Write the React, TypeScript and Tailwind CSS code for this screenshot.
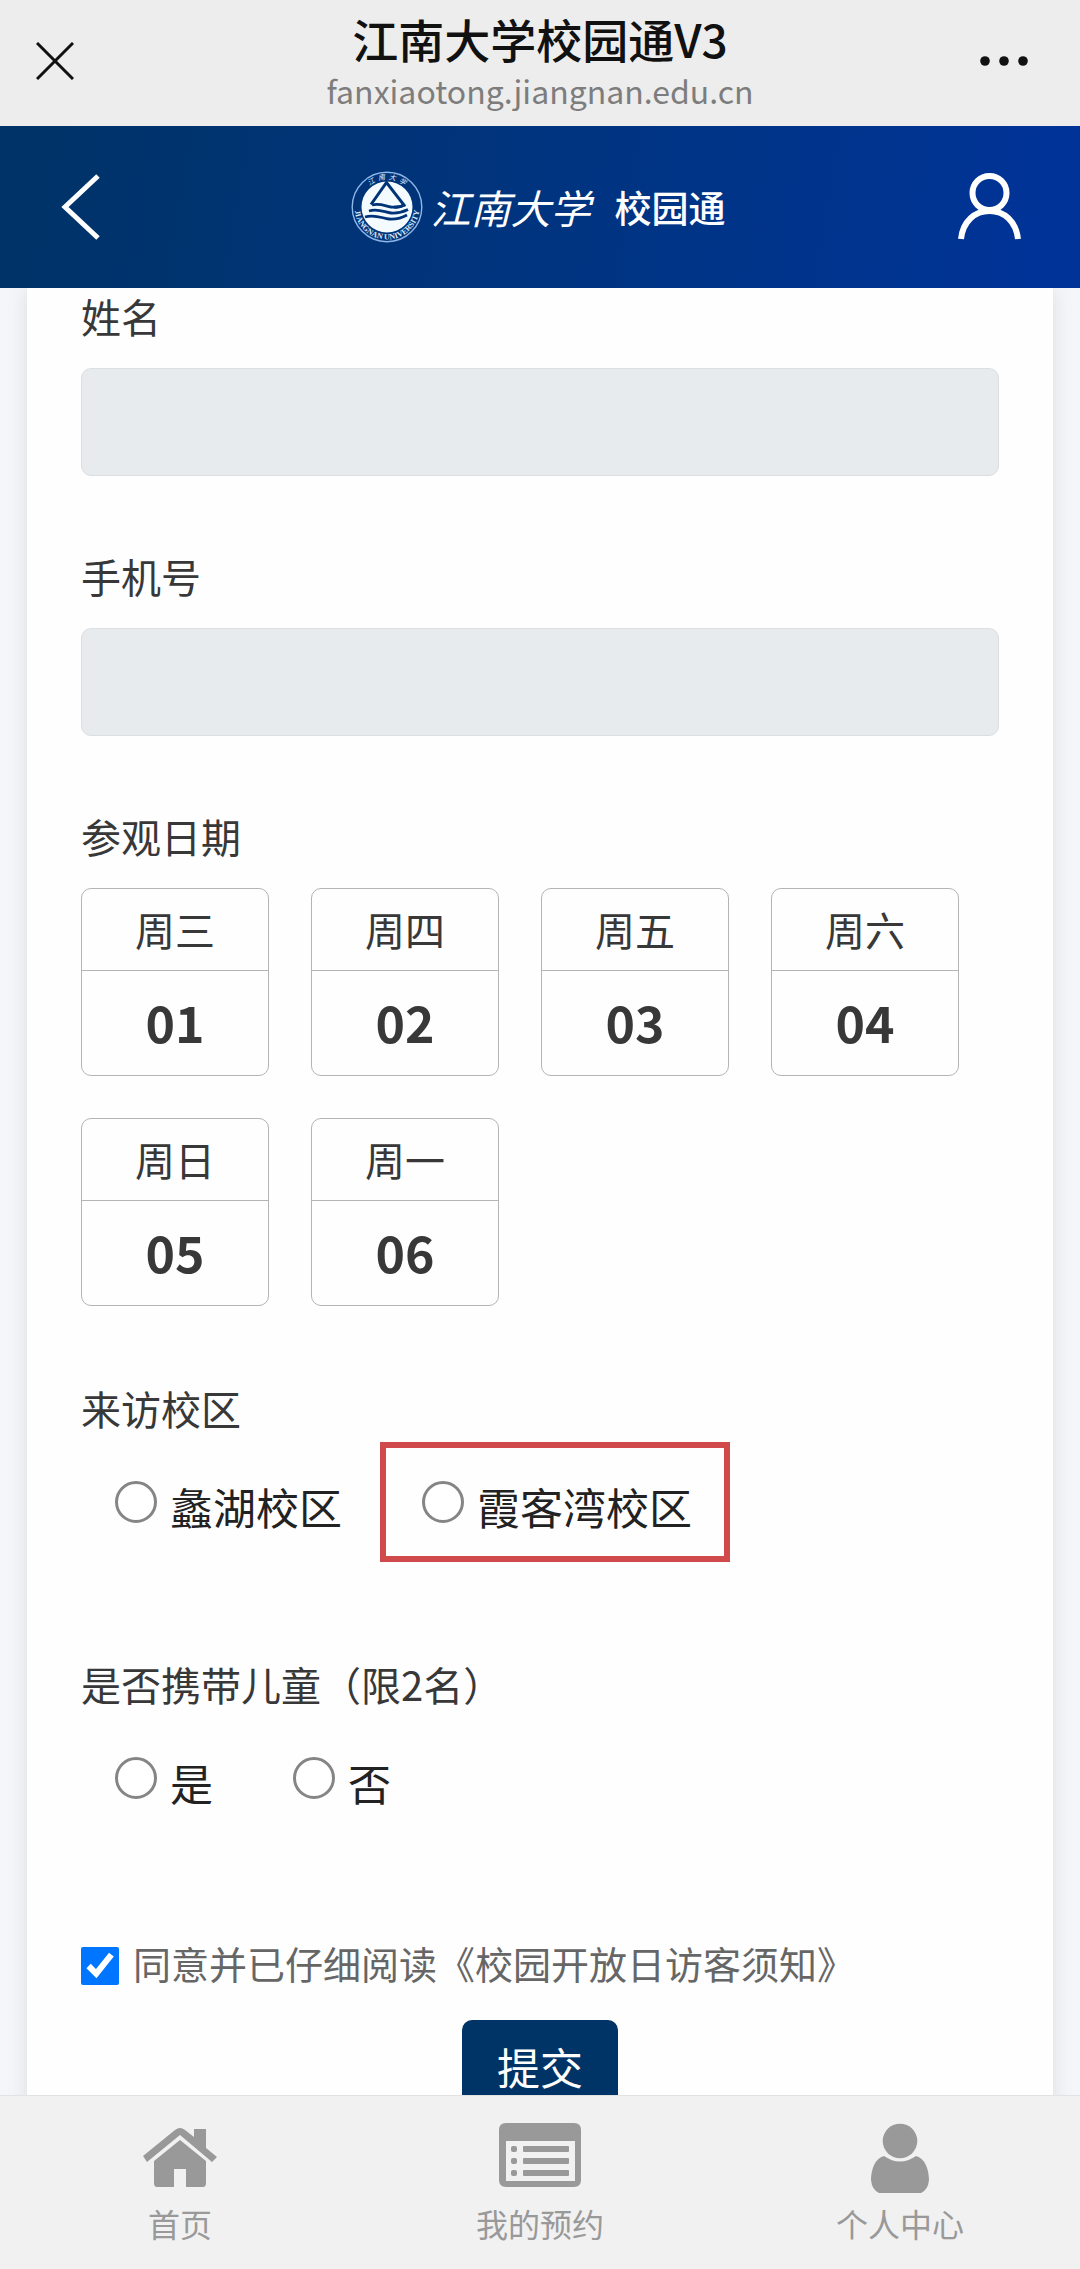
import React, { useState } from 'react';

const days = [
  { week: '周三', day: '01' },
  { week: '周四', day: '02' },
  { week: '周五', day: '03' },
  { week: '周六', day: '04' },
  { week: '周日', day: '05' },
  { week: '周一', day: '06' },
];

function Emblem() {
  return (
    <svg viewBox="0 0 72 72" className="size-[72px]" aria-hidden="true">
      <defs>
        <path id="ring-bottom" d="M3.500 36a32.500 32.500 0 0 0 65 0" />
        <path id="ring-top" d="M8.500 36a27.500 27.500 0 0 1 55 0" />
      </defs>
      <circle cx="36" cy="36" r="34.800" fill="none" stroke="#8fb6e8" strokeWidth="1.400" />
      <circle cx="36" cy="36" r="25.500" fill="#f4fbff" />
      <path d="M20 33.500 35.500 11.500 53 34q-5 3-10 2" fill="none" stroke="#003377" strokeWidth="3" />
      <g fill="none" stroke="#003377" strokeWidth="2.800">
        <path d="M21 34c8-2 13 1 19 2 6 .5 9 .5 14-2" />
        <path d="M18 40c9-3 16 1.500 22 2 7 .5 11-.5 17-3.500" />
        <path d="M14 46c10-3 18 1.500 24 2 8 .5 12-.5 18-4" />
      </g>
      <text className="font-['Liberation_Serif',serif] text-[8px] font-bold" fill="#dcebff">
        <textPath href="#ring-bottom" startOffset="50%" textAnchor="middle">JIANGNAN UNIVERSITY</textPath>
      </text>
      <text className="text-[7px] italic" fill="#dcebff">
        <textPath href="#ring-top" startOffset="50%" textAnchor="middle">江&#160;&#160;南&#160;&#160;大&#160;&#160;学</textPath>
      </text>
    </svg>
  );
}

function TextField({ id, label }: { id: string; label: string }) {
  return (
    <div>
      <label htmlFor={id} className="block leading-[56px]">{label}</label>
      <input
        id={id}
        type="text"
        disabled
        className="mt-6 block h-[108px] w-full rounded-[10px] border border-[#dcdfe2] bg-[#e8ebee] px-6"
      />
    </div>
  );
}

function Option({ name, label, marked }: { name: string; label: string; marked?: boolean }) {
  return (
    <label
      className={`flex h-[120px] items-center gap-[13px] border-[6px] pl-9 pr-8 text-[43px] text-[#222] ${
        marked ? 'border-[#d04a4c]' : 'border-transparent'
      }`}
    >
      <input
        type="radio"
        name={name}
        className="size-[42px] appearance-none rounded-full border-[3px] border-[#858585] bg-white checked:border-[12px] checked:border-[#0075ff]"
      />
      <span className="pt-2 leading-[60px]">{label}</span>
    </label>
  );
}

export default function App() {
  const [agreed, setAgreed] = useState(true);

  return (
    <div className="flex min-h-screen flex-col bg-[#f4f6f9] font-['Noto_Sans_CJK_SC',sans-serif] text-[40px] text-[#383838]">
      <div className="sticky top-0 z-10">
        <header className="flex h-[126px] items-center justify-between bg-[#ededed] px-9 pb-1">
          <button aria-label="关闭" className="w-16">
            <svg viewBox="0 0 38 38" className="size-[38px]" fill="none" stroke="#111" strokeWidth="3">
              <path d="M1 1l36 36M37 1 1 37" />
            </svg>
          </button>
          <div className="pt-1 text-center">
            <h1 className="text-[46px] font-medium leading-[54px] text-[#111]">江南大学校园通V3</h1>
            <p className="text-[32px] leading-[50px] text-[#7d7d7d]">fanxiaotong.jiangnan.edu.cn</p>
          </div>
          <button aria-label="更多" className="w-16">
            <svg viewBox="0 0 48 10" className="h-[10px] w-12" fill="#111">
              <circle cx="5" cy="5" r="4.800" />
              <circle cx="24" cy="5" r="4.800" />
              <circle cx="43" cy="5" r="4.800" />
            </svg>
          </button>
        </header>

        <nav className="flex h-[162px] items-center justify-between bg-linear-100 from-[#003366] to-[#003399] px-14 text-white">
          <button aria-label="返回" className="w-16">
            <svg viewBox="0 0 48 66" className="h-[66px] w-12" fill="none" stroke="currentColor" strokeWidth="5">
              <path d="M42 2 9 33l33 31" />
            </svg>
          </button>
          <div className="flex items-center">
            <Emblem />
            <span className="ml-2 text-[40px] italic leading-none">江南大学</span>
            <span className="ml-6 text-[37px] font-medium leading-none">校园通</span>
          </div>
          <button aria-label="我的">
            <svg viewBox="0 0 68 68" className="size-[68px]" fill="none" stroke="currentColor" strokeWidth="6">
              <circle cx="33.500" cy="20" r="17" />
              <path d="M5 66C7 48 19 38 33.500 38S60 48 62 66" />
            </svg>
          </button>
        </nav>
      </div>

      <main className="mx-[27px] flex-1 bg-[#fefefe] px-[54px] shadow-[0_0_20px_rgba(0,0,0,0.1)]">
        <form className="flex flex-col gap-[72px]" onSubmit={(e) => e.preventDefault()}>
          <TextField id="name" label="姓名" />
          <TextField id="phone" label="手机号" />

          <section>
            <h2 className="leading-[56px]">参观日期</h2>
            <div className="mt-6 flex flex-wrap gap-[42px]">
              {days.map((d) => (
                <button
                  key={d.day}
                  type="button"
                  className="flex size-[188px] flex-col rounded-[10px] border border-[#b4b4b4]"
                >
                  <span className="h-[82px] w-full border-b border-[#b4b4b4] leading-[80px]">{d.week}</span>
                  <span className="w-full text-[50px] font-bold leading-[100px]">{d.day}</span>
                </button>
              ))}
            </div>
          </section>

          <fieldset className="mb-5">
            <legend className="leading-[60px]">来访校区</legend>
            <div className="-ml-2 mt-1 flex">
              <Option name="campus" label="蠡湖校区" />
              <Option name="campus" label="霞客湾校区" marked />
            </div>
          </fieldset>

          <fieldset className="mb-5">
            <legend className="leading-[60px]">是否携带儿童（限2名）</legend>
            <div className="-ml-2 mt-1 flex">
              <Option name="children" label="是" />
              <Option name="children" label="否" />
            </div>
          </fieldset>

          <div>
            <label className="flex h-[72px] items-center gap-[14px] text-[38px] text-[#666]">
              <input
                type="checkbox"
                checked={agreed}
                onChange={(e) => setAgreed(e.target.checked)}
                className="size-[38px] accent-[#0075ff]"
              />
              <span className="pb-2">同意并已仔细阅读《校园开放日访客须知》</span>
            </label>
            <button
              type="submit"
              className="mx-auto mt-[18px] block h-24 w-[156px] rounded-[10px] bg-[#003366] pb-1 text-[43px] text-white"
            >
              提交
            </button>
          </div>
        </form>
      </main>

      <nav className="fixed inset-x-0 bottom-0 z-10 grid h-[174px] grid-cols-3 border-t border-[#e2e2e2] bg-[#f1f1f1] text-[32px] text-[#999]">
        <a href="#home" className="flex flex-col items-center pt-6">
          <svg viewBox="0 0 74 76" className="h-[76px] w-[74px]" fill="currentColor">
            <path d="M0 36 32 10q5-4 10 0l9 7V9h12v19l11 9-5 5L37 15 4 42z" />
            <path d="M37 20 63 41v22q0 4-3 4H43V49H31v18H14q-3 0-3-4V41z" />
          </svg>
          <span className="leading-[54px]">首页</span>
        </a>
        <a href="#bookings" className="flex flex-col items-center pt-6">
          <svg viewBox="0 0 82 76" className="h-[76px] w-[82px]" fill="currentColor">
            <path fillRule="evenodd" d="M7 3h68q7 0 7 7v50q0 7-7 7H7q-7 0-7-7V10q0-7 7-7zm0 18v40h69V21z" />
            <rect x="12" y="26" width="6" height="6" rx="2" />
            <rect x="12" y="38" width="6" height="6" rx="2" />
            <rect x="12" y="50" width="6" height="6" rx="2" />
            <rect x="24" y="26" width="46" height="6" rx="1" />
            <rect x="24" y="38" width="46" height="6" rx="1" />
            <rect x="24" y="50" width="46" height="6" rx="1" />
          </svg>
          <span className="leading-[54px]">我的预约</span>
        </a>
        <a href="#me" className="flex flex-col items-center pt-6">
          <svg viewBox="0 0 60 76" className="h-[76px] w-[60px]" fill="currentColor">
            <circle cx="30" cy="21" r="17.300" />
            <path d="M14 36q16 11 32 0C55 38 59 50 59 60q-1 10-8 13H9q-7-3-8-13C1 50 5 38 14 36z" />
          </svg>
          <span className="leading-[54px]">个人中心</span>
        </a>
      </nav>
    </div>
  );
}
